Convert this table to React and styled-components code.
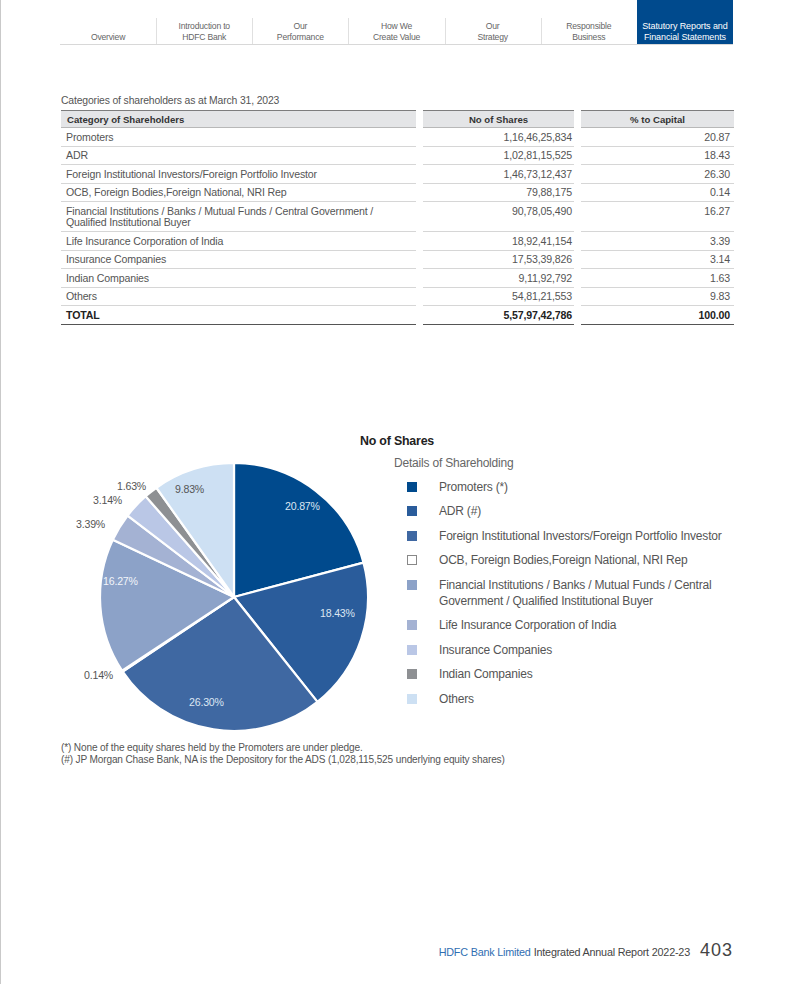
import { Fragment } from "react";
import styled, { createGlobalStyle } from "styled-components";

const Global = createGlobalStyle`
  html, body {
    margin: 0;
    padding: 0;
    background: #fff;
  }
  body {
    font-family: "Liberation Sans", Arial, sans-serif;
    color: #555;
  }
`;

const Page = styled.div`
  width: 791px;
  height: 984px;
  border-left: 1px solid #c9c9c9;
  display: flex;
  flex-direction: column;
  box-sizing: border-box;
  overflow: hidden;
`;

const Nav = styled.nav`
  margin-left: 59px;
  width: 673px;
  height: 45px;
  display: grid;
  grid-template-columns: repeat(7, 1fr);
  border-bottom: 1px solid #d8d8d8;
  box-sizing: border-box;
`;

const Tab = styled.div`
  position: relative;
  display: flex;
  align-items: flex-end;
  justify-content: center;
  text-align: center;
  font-size: ${(p) => (p.$active ? "9px" : "8.6px")};
  line-height: 11px;
  letter-spacing: ${(p) => (p.$active ? "-0.1px" : "-0.2px")};
  padding-bottom: 1px;
  color: ${(p) => (p.$active ? "#fff" : "#666")};
  background: ${(p) => (p.$active ? "#004a8d" : "transparent")};

  &::before {
    content: "";
    display: ${(p) => (p.$first || p.$active ? "none" : "block")};
    position: absolute;
    left: 0;
    bottom: 0;
    height: 26px;
    border-left: 1px solid #e0e0e0;
  }
`;

const Content = styled.div`
  padding: 0 59px 0 60px;
  display: flex;
  flex-direction: column;
  flex: 1;
`;

const Caption = styled.div`
  margin-top: 50px;
  font-size: 10.4px;
  color: #555;
  margin-bottom: 4px;
  letter-spacing: -0.15px;
`;

const Table = styled.div`
  display: grid;
  grid-template-columns: 355px 151px 153px;
  column-gap: 7px;
  font-size: 10.6px;
  letter-spacing: -0.15px;
`;

const HeadCell = styled.div`
  background: #e4e5e7;
  border-top: 1.5px solid #7d7d7d;
  border-bottom: 1px solid #b8b8b8;
  height: 18px;
  box-sizing: border-box;
  padding: 0 6px;
  display: flex;
  align-items: center;
  justify-content: ${(p) => (p.$center ? "center" : "flex-start")};
  font-weight: bold;
  font-size: 9.6px;
  color: #333;
  letter-spacing: 0;
`;

const Cell = styled.div`
  border-bottom: ${(p) => (p.$total ? "1.5px solid #555" : "1px solid #d6d6d6")};
  padding: 3.5px 6px 2.5px 5px;
  line-height: 11.5px;
  text-align: ${(p) => (p.$pad ? "right" : "left")};
  padding-right: ${(p) => p.$pad || "6px"};
  font-weight: ${(p) => (p.$total ? "bold" : "normal")};
  color: ${(p) => (p.$total ? "#222" : "#555")};
`;

const ChartArea = styled.div`
  display: flex;
  margin-top: 109px;
`;

const PieBox = styled.div`
  width: 299px;
  padding-top: 21px;
  flex-shrink: 0;

  svg {
    overflow: visible;
    display: block;
  }
`;

const Legend = styled.div`
  display: flex;
  flex-direction: column;
  font-size: 12px;
  letter-spacing: -0.2px;
`;

const LegendTitle = styled.div`
  font-weight: bold;
  color: #222;
  font-size: 12.4px;
  line-height: 15px;
`;

const LegendSub = styled.div`
  margin: 7px 0 5px 34px;
  color: #666;
  line-height: 15px;
`;

const LegendItem = styled.div`
  display: flex;
  align-items: flex-start;
  margin-left: 47px;
  padding: 3px 0 5.5px;
  line-height: 16px;
  color: #555;
`;

const Swatch = styled.span`
  width: 10px;
  height: 10px;
  margin-top: 3px;
  margin-right: 22px;
  flex-shrink: 0;
  box-sizing: border-box;
  background: ${(p) => p.$color};
  border: ${(p) => (p.$outline ? "1px solid #888" : "none")};
`;

const Notes = styled.div`
  margin-top: 7px;
  font-size: 10.1px;
  line-height: 12px;
  color: #555;
  letter-spacing: -0.15px;
`;

const Footer = styled.div`
  margin-top: auto;
  margin-bottom: 23px;
  display: flex;
  justify-content: flex-end;
  align-items: baseline;
  font-size: 10.8px;
  color: #444;
  letter-spacing: -0.2px;
`;

const Brand = styled.span`
  color: #2f6eb2;
  margin-right: 3px;
`;

const PageNo = styled.span`
  font-size: 18px;
  letter-spacing: 1px;
  margin-left: 10px;
  margin-right: -1px;
  color: #444;
`;

const tabs = [
  ["Overview"],
  ["Introduction to", "HDFC Bank"],
  ["Our", "Performance"],
  ["How We", "Create Value"],
  ["Our", "Strategy"],
  ["Responsible", "Business"],
  ["Statutory Reports and", "Financial Statements"],
];

const rows = [
  ["Promoters", "1,16,46,25,834", "20.87"],
  ["ADR", "1,02,81,15,525", "18.43"],
  ["Foreign Institutional Investors/Foreign Portfolio Investor", "1,46,73,12,437", "26.30"],
  ["OCB, Foreign Bodies,Foreign National,  NRI Rep", "79,88,175", "0.14"],
  ["Financial Institutions / Banks / Mutual Funds / Central Government / Qualified Institutional Buyer", "90,78,05,490", "16.27"],
  ["Life Insurance Corporation of  India", "18,92,41,154", "3.39"],
  ["Insurance Companies", "17,53,39,826", "3.14"],
  ["Indian Companies", "9,11,92,792", "1.63"],
  ["Others", "54,81,21,553", "9.83"],
];

const slices = [
  { name: "Promoters (*)", pct: 20.87, color: "#004a8d", label: "20.87%", lx: 224, ly: 52, tc: "#dce6f2" },
  { name: "ADR (#)", pct: 18.43, color: "#2a5c9b", label: "18.43%", lx: 259, ly: 159, tc: "#dce6f2" },
  { name: "Foreign Institutional Investors/Foreign Portfolio Investor", pct: 26.3, color: "#3f68a2", label: "26.30%", lx: 128, ly: 248, tc: "#dce6f2" },
  { name: "OCB, Foreign Bodies,Foreign National,  NRI Rep", pct: 0.14, color: "#ffffff", label: "0.14%", lx: 23, ly: 221, tc: "#555", outline: true },
  { name: "Financial Institutions / Banks / Mutual Funds / Central Government / Qualified Institutional Buyer", pct: 16.27, color: "#8ca2c8", label: "16.27%", lx: 42, ly: 127, tc: "#f2f5fa" },
  { name: "Life Insurance Corporation of India", pct: 3.39, color: "#a4b2d3", label: "3.39%", lx: 15, ly: 70, tc: "#555" },
  { name: "Insurance Companies", pct: 3.14, color: "#bac7e6", label: "3.14%", lx: 32, ly: 46, tc: "#555" },
  { name: "Indian Companies", pct: 1.63, color: "#8e9093", label: "1.63%", lx: 56, ly: 32, tc: "#555" },
  { name: "Others", pct: 9.83, color: "#cde0f3", label: "9.83%", lx: 114, ly: 35, tc: "#555" },
];

const CX = 173;
const CY = 142;
const R = 134;

function arcPath(a0, a1) {
  const p = (a) => [CX + R * Math.sin(a), CY - R * Math.cos(a)];
  const [x0, y0] = p(a0);
  const [x1, y1] = p(a1);
  const large = a1 - a0 > Math.PI ? 1 : 0;
  return `M${CX},${CY} L${x0.toFixed(2)},${y0.toFixed(2)} A${R},${R} 0 ${large} 1 ${x1.toFixed(2)},${y1.toFixed(2)} Z`;
}

function Pie() {
  let acc = 0;
  const paths = slices.map((s) => {
    const a0 = (acc / 100) * Math.PI * 2;
    acc += s.pct;
    const a1 = (acc / 100) * Math.PI * 2;
    return <path key={s.name} d={arcPath(a0, a1)} fill={s.color} stroke="#fff" strokeWidth="2.2" strokeLinejoin="round" />;
  });
  return (
    <svg width="299" height="280" viewBox="0 0 299 280">
      {paths}
      {slices.map((s) => (
        <text
          key={s.label}
          x={s.lx}
          y={s.ly}
          fill={s.tc}
          fontSize="10.6"
          fontFamily="Liberation Sans, Arial, sans-serif"
          letterSpacing="-0.2"
          dominantBaseline="middle"
        >
          {s.label}
        </text>
      ))}
    </svg>
  );
}

export default function App() {
  return (
    <>
      <Global />
      <Page>
        <Nav>
          {tabs.map((t, i) => (
            <Tab key={i} $first={i === 0} $active={i === tabs.length - 1}>
              <div>
                {t.map((l) => (
                  <div key={l}>{l}</div>
                ))}
              </div>
            </Tab>
          ))}
        </Nav>

        <Content>
          <Caption>Categories of shareholders as at March 31, 2023</Caption>
          <Table>
            <HeadCell>Category of Shareholders</HeadCell>
            <HeadCell $center>No of Shares</HeadCell>
            <HeadCell $center>% to Capital</HeadCell>
            {rows.map((r) => (
              <Fragment key={r[0]}>
                <Cell>{r[0]}</Cell>
                <Cell $pad="2px">{r[1]}</Cell>
                <Cell $pad="4px">{r[2]}</Cell>
              </Fragment>
            ))}
            <Cell $total>TOTAL</Cell>
            <Cell $total $pad="2px">5,57,97,42,786</Cell>
            <Cell $total $pad="4px">100.00</Cell>
          </Table>

          <ChartArea>
            <PieBox>
              <Pie />
            </PieBox>
            <Legend>
              <LegendTitle>No of Shares</LegendTitle>
              <LegendSub>Details of Shareholding</LegendSub>
              {slices.map((s) => (
                <LegendItem key={s.name}>
                  <Swatch $color={s.color} $outline={s.outline} />
                  <span>{s.name}</span>
                </LegendItem>
              ))}
            </Legend>
          </ChartArea>

          <Notes>
            <div>(*) None of the equity shares held by the Promoters are under pledge.</div>
            <div>(#) JP Morgan Chase Bank, NA is the Depository for the ADS (1,028,115,525 underlying equity shares)</div>
          </Notes>

          <Footer>
            <Brand>HDFC Bank Limited</Brand> Integrated Annual Report 2022-23
            <PageNo>403</PageNo>
          </Footer>
        </Content>
      </Page>
    </>
  );
}
